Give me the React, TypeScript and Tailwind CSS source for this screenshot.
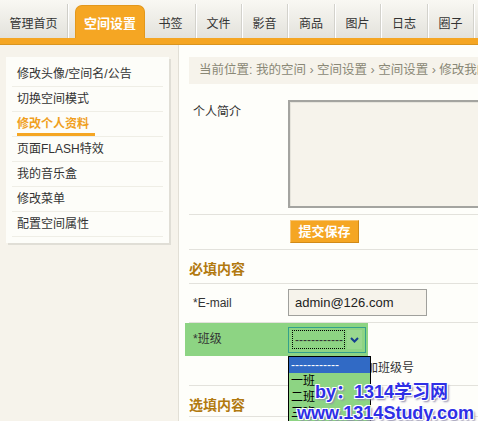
import React from "react";

const tabs: { label: string; w: string }[] = [
  { label: "书签", w: "w-[50px]" },
  { label: "文件", w: "w-[46px]" },
  { label: "影音", w: "w-[46px]" },
  { label: "商品", w: "w-[47px]" },
  { label: "图片", w: "w-[46px]" },
  { label: "日志", w: "w-[47px]" },
  { label: "圈子", w: "w-[46px]" },
];

const menu = [
  "修改头像/空间名/公告",
  "切换空间模式",
  "修改个人资料",
  "页面FLASH特效",
  "我的音乐盒",
  "修改菜单",
  "配置空间属性",
];

export default function App() {
  return (
    <div className="relative w-[478px] h-[421px] overflow-hidden bg-[#f6f3eb] text-[12px] text-[#333] [font-family:'Liberation_Sans','Noto_Sans_CJK_SC',sans-serif]">
      {/* top nav */}
      <div className="h-[38px] bg-linear-to-b from-[#f9f8f3] to-[#e3e2dc] flex items-end">
        <div className="w-[68px] h-[34px] flex items-center justify-center pt-[5px] border-r border-[#cfcec8] shadow-[1px_0_0_#ffffff]">
          管理首页
        </div>
        <div className="w-[7px]" />
        <div className="w-[70px] h-[33px] rounded-t-[7px] bg-[#f5a623] border border-b-0 border-[#e3981c] text-white font-bold text-[13px] flex items-center justify-center pt-[3px]">
          空间设置
        </div>
        <div className="w-[1px]" />
        {tabs.map((t) => (
          <div
            key={t.label}
            className={`${t.w} h-[34px] flex items-center justify-center pt-[5px] border-r border-[#d3d2cc] shadow-[1px_0_0_#ffffff]`}
          >
            {t.label}
          </div>
        ))}
      </div>
      <div className="h-[7px] bg-[#f5a623] border-b border-[#d99520]" />

      {/* body */}
      <div className="flex">
        {/* sidebar */}
        <div className="w-[178px] shrink-0 pt-[12px] pl-[6px]">
          <div className="w-[163px] bg-[#fdfdf9] shadow-[2px_2px_0_#e0ded6] px-[6px] pt-[5px] pb-[6px]">
            {menu.map((m, i) =>
              i === 2 ? (
                <div key={m} className="h-[25px] border-b border-[#efeee6] flex items-end pl-[5px]">
                  <span className="inline-block w-[78px] leading-[14px] pb-[2px] border-b-[3px] border-[#f5a623] text-[#f0a01e] font-bold">
                    {m}
                  </span>
                </div>
              ) : (
                <div key={m} className="h-[25px] border-b border-[#efeee6] flex items-center pl-[5px]">
                  {m}
                </div>
              )
            )}
          </div>
        </div>

        {/* main */}
        <div className="flex-1 min-w-0 h-[400px] bg-[#fefefa] border-l border-[#e2dfd6] pl-[10px] pt-[12px]">
          <div className="h-[27px] bg-[#f6f3eb] pl-[10px] flex items-center whitespace-nowrap overflow-hidden text-[#8a8876] text-[12.5px]">
            当前位置: 我的空间 › 空间设置 › 空间设置 › 修改我的资料
          </div>

          {/* 个人简介 */}
          <div className="flex pt-[16px] pb-[6px] border-b border-[#e3e2dc]">
            <div className="w-[99px] shrink-0 pl-[4px] pt-[3px]">个人简介</div>
            <div className="w-[220px] h-[108px] shrink-0 bg-[#f6f3eb] border-2 border-[#a4a4a0] shadow-[inset_1px_1px_0_#e6e4dc]" />
          </div>

          {/* button */}
          <div className="h-[35px] border-b border-[#e3e2dc] pl-[101px] pt-[5px]">
            <div className="w-[69px] h-[23px] bg-[#f5a623] border border-t-[#f8c574] border-l-[#f8c574] border-r-[#d18a18] border-b-[#d18a18] text-white font-bold text-[13px] flex items-center justify-center">
              提交保存
            </div>
          </div>

          {/* heading */}
          <div className="h-[34px] border-b border-[#e3e2dc] pt-[11px] leading-[16px] text-[14px] font-bold text-[#b27a10]">
            必填内容
          </div>

          {/* email */}
          <div className="h-[39px] border-b border-[#e3e2dc] flex pt-[5px]">
            <div className="w-[99px] shrink-0 pl-[4px] pt-[5px]">*E-mail</div>
            <div className="w-[139px] h-[27px] bg-[#f6f3eb] border border-[#a0a09c] flex items-center pl-[6px] text-[13px] text-[#222]">
              admin@126.com
            </div>
          </div>

          {/* class */}
          <div className="h-[63px] border-b border-[#e3e2dc]">
            <div className="-ml-[4px] w-[183px] h-[33px] bg-[#8dd483] flex items-center">
              <div className="w-[103px] shrink-0 pl-[8px] pb-[2px]">*班级</div>
              <div className="w-[78px] h-[26px] border border-[#33a08c] flex items-center pl-[3px] pr-[3px] gap-[2px]">
                <div className="w-[54px] h-[19px] border border-dotted border-black flex items-center pl-[2px] text-[12px] leading-none overflow-hidden">
                  ------------
                </div>
                <div className="w-[15px] h-[19px] bg-[#9ad88f] flex items-center justify-center">
                  <svg width="9" height="6" viewBox="0 0 9 6">
                    <path d="M1 1 L4.5 4.5 L8 1" stroke="#163f8f" strokeWidth="2" fill="none" />
                  </svg>
                </div>
              </div>
            </div>
            <div className="pl-[117px] pt-[3px]">如没有请添加班级号</div>
          </div>

          {/* optional heading */}
          <div className="h-[31px] border-b border-[#e3e2dc] pt-[11px] leading-[16px] text-[14px] font-bold text-[#b27a10]">
            选填内容
          </div>
        </div>
      </div>

      {/* dropdown list */}
      <div className="absolute left-[288px] top-[356px] w-[83px] h-[80px] bg-[#8dd483] border border-black">
        <div className="h-[16px] bg-[#316ac5] text-white flex items-center pl-[2px] leading-none">------------</div>
        <div className="h-[16px] flex items-center pl-[2px] text-black">一班</div>
        <div className="h-[16px] flex items-center pl-[2px] text-black">二班</div>
        <div className="h-[16px] flex items-center pl-[2px] text-black">三班</div>
      </div>

      {/* watermark */}
      <div className="absolute left-[297px] top-[382px] text-[#2f2fe6] font-bold text-[18px] leading-[21px] [text-shadow:1px_1px_0_#fff,-1px_-1px_0_#fff,1px_-1px_0_#fff,-1px_1px_0_#fff,2px_2px_2px_#8a86a8]">
        <div className="pl-[18px]">by：1314学习网</div>
        <div>www.1314Study.com</div>
      </div>
    </div>
  );
}
